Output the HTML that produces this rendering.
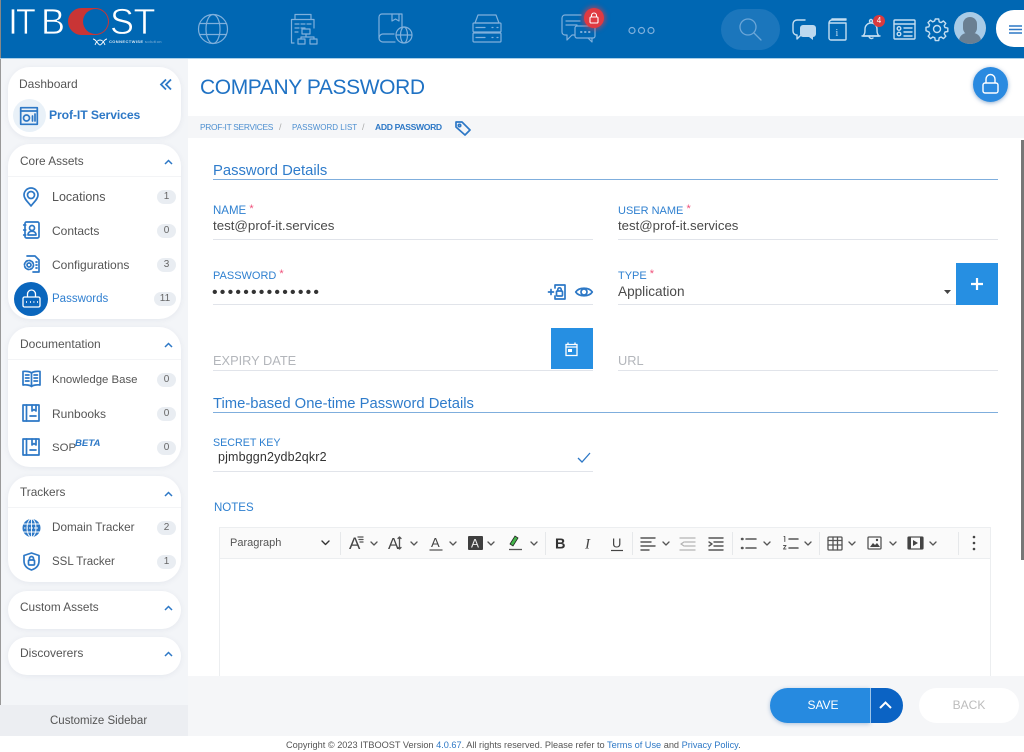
<!DOCTYPE html>
<html><head><meta charset="utf-8"><style>
*{box-sizing:border-box}
html,body{margin:0;padding:0;width:1024px;height:748px;overflow:hidden;background:#fff;font-family:"Liberation Sans",sans-serif;color:#555}
.a{position:absolute;white-space:nowrap}
.card{position:absolute;left:8px;width:173px;background:#fff;border-radius:22px;box-shadow:0 1px 6px rgba(60,80,110,.08)}
.hd{position:absolute;left:20px;font-size:12px;color:#555;line-height:16px;white-space:nowrap}
.it{position:absolute;left:52px;font-size:12px;color:#555;line-height:16px;white-space:nowrap}
.bd{position:absolute;left:157px;width:19px;height:14px;border-radius:7px;background:#e9edf2;color:#666;font-size:10px;line-height:14px;text-align:center}
.lb{position:absolute;font-size:11px;color:#2f80d0;line-height:14px;white-space:nowrap}
.lb i{color:#f0507a;font-style:normal;font-size:11px;position:relative;top:-2px}
.v{position:absolute;font-size:13.3px;color:#4a4a4a;line-height:16px;white-space:nowrap}
.ph{position:absolute;font-size:12.8px;color:#b3b6bb;line-height:16px}
.ln{position:absolute;height:1px;background:#e1e4ea}
.sec{position:absolute;font-size:14.8px;color:#2f7ccb;line-height:18px;white-space:nowrap}
svg{position:absolute;overflow:visible}
.ic{fill:none;stroke:#2d78c6;stroke-width:1.7;stroke-linecap:round;stroke-linejoin:round}
.hi{fill:none;stroke:#7fb0dc;stroke-width:1.2;stroke-linejoin:round;stroke-linecap:round}
.wi{fill:none;stroke:#c4def1;stroke-width:1.4;stroke-linejoin:round;stroke-linecap:round}
.tb{fill:none;stroke:#555;stroke-width:1.3;stroke-linecap:round;stroke-linejoin:round}
.tt{position:absolute;color:#444;white-space:nowrap}
.logo{position:absolute;font-size:36px;line-height:40px;top:2px;color:#fff;-webkit-text-stroke:.7px #0067b3;white-space:nowrap}
</style></head><body>

<!-- main backgrounds -->
<div class="a" style="left:0;top:58px;width:188px;height:690px;background:#f3f5f8"></div>
<div class="a" style="left:188px;top:116px;width:836px;height:22px;background:#f5f6f8"></div>
<div class="a" style="left:0;top:58px;width:1px;height:690px;background:#999"></div>
<div class="a" style="left:1021px;top:140px;width:3px;height:420px;background:#777"></div>

<!-- header -->
<div class="a" style="left:0;top:0;width:1024px;height:58px;background:#0067b3"></div>
<div class="a" style="left:0;top:58px;width:1024px;height:1px;background:#a9cfe8"></div>
<div class="a" style="left:0;top:0;width:1px;height:58px;background:#888"></div>

<!-- logo -->
<div class="a" style="left:68px;top:8px;width:41px;height:27px;border-radius:14px;background:#c93535"></div>
<div class="a" style="left:83px;top:9px;width:25px;height:25px;border-radius:13px;background:#0067b3"></div>
<div class="logo" style="left:8px">I</div>
<div class="logo" style="left:16px;transform:scaleX(.9);transform-origin:0 0">T</div>
<div class="logo" style="left:41px">B</div>
<div class="logo" style="left:110px;letter-spacing:-.5px">ST</div>
<svg style="left:90px;top:37px" width="20" height="10" viewBox="0 0 20 10"><path d="M3 2c3 0 5 6 7 6s4-6 7-6M5 8c1-3 3-5 5-5s4 2 5 5" fill="none" stroke="#fff" stroke-width=".9"/></svg>
<div class="a" style="left:109px;top:39px;font-size:4px;line-height:6px;color:#dce8f3;letter-spacing:.4px;font-weight:bold">CONNECTWISE <span style="font-weight:400;color:#8fb8da">solution</span></div>

<!-- header icons -->
<svg style="left:198px;top:14px" width="30" height="30" viewBox="0 0 30 30"><g class="hi"><circle cx="15" cy="15" r="14.5"/><ellipse cx="15" cy="15" rx="7" ry="14.5"/><path d="M2 9.500h26M2 20.500h26"/></g></svg>
<svg style="left:290px;top:13px" width="29" height="32" viewBox="0 0 29 32"><g class="hi"><path d="M4 30H1.500V6.500H24V15M5 6V1.500h16V6"/><path d="M5 11h4M11 11h4M17 11h4M5 15h4M11 15h4M5 19h3"/><rect x="12" y="16" width="8" height="5"/><rect x="8" y="26" width="7" height="5"/><rect x="20" y="26" width="7" height="5"/><path d="M16 21v3M11 26v-2h13v2"/></g></svg>
<svg style="left:378px;top:13px" width="36" height="31" viewBox="0 0 36 31"><g class="hi"><path d="M17 29H5a4 4 0 0 1-4-4V4a3 3 0 0 1 3-3h20v15"/><path d="M1 25a4 4 0 0 1 4-4h11"/><path d="M14 1v7l3.500-2 3.500 2V1"/><circle cx="26" cy="22" r="8"/><ellipse cx="26" cy="22" rx="3.500" ry="8"/><path d="M18 22h16"/></g></svg>
<svg style="left:472px;top:14px" width="30" height="29" viewBox="0 0 30 29"><g class="hi"><path d="M3 9l3-8h18l3 8z"/><rect x="1" y="9" width="28" height="9" rx="1"/><rect x="1" y="19" width="28" height="9" rx="1"/><path d="M4 13.500h9M4 23.500h9M20 13.500h1M25 13.500h1M20 23.500h1M25 23.500h1"/></g></svg>
<svg style="left:561px;top:14px" width="36" height="29" viewBox="0 0 36 29"><g class="hi"><path d="M20 1H4a3 3 0 0 0-3 3v14a3 3 0 0 0 3 3h2v5l5-5h3"/><path d="M5 7h14M5 11h11"/><rect x="14" y="12" width="20" height="12" rx="2"/><path d="M27 24l4 4v-4"/><path d="M20 18h.5M24 18h.5M28 18h.5" stroke-width="2"/></g></svg>
<div class="a" style="left:584px;top:8px;width:20px;height:20px;border-radius:10px;background:#e03a42;box-shadow:0 0 4px 2px rgba(220,60,70,.55)"></div>
<svg style="left:589px;top:12px" width="10" height="12" viewBox="0 0 10 12"><path d="M2.500 5V3.500a2.500 2.500 0 0 1 5 0V5" fill="none" stroke="#fff" stroke-width="1.100"/><rect x="1" y="5" width="8" height="6" rx="1" fill="none" stroke="#fff" stroke-width="1.100"/></svg>
<svg style="left:628px;top:26px" width="27" height="9" viewBox="0 0 27 9"><g class="hi" stroke-width="1"><circle cx="4" cy="4.500" r="3"/><circle cx="13.500" cy="4.500" r="3"/><circle cx="23" cy="4.500" r="3"/></g></svg>

<div class="a" style="left:721px;top:9px;width:59px;height:41px;border-radius:21px;background:#1b76bc"></div>
<svg style="left:739px;top:18px" width="23" height="23" viewBox="0 0 23 23"><g fill="none" stroke="#6ba6d8" stroke-width="1.300"><circle cx="9" cy="9" r="8"/><path d="M15 15l7 7" stroke-linecap="round"/></g></svg>

<svg style="left:792px;top:18px" width="25" height="23" viewBox="0 0 25 23"><path class="wi" d="M13 2H5a4 4 0 0 0-4 4v7a4 4 0 0 0 4 4v4l4-4"/><path d="M11 7h10a3 3 0 0 1 3 3v6a3 3 0 0 1-3 3v3l-4-3h-6a3 3 0 0 1-3-3v-6a3 3 0 0 1 3-3z" fill="#bcd8ee"/></svg>
<svg style="left:828px;top:18px" width="19" height="23" viewBox="0 0 19 23"><g class="wi"><path d="M1 5v15a2 2 0 0 0 2 2h14a1 1 0 0 0 1-1V5z"/><path d="M1 5a3 3 0 0 1 3-3h14M4 2V1h14"/></g><text x="7.500" y="18" font-size="10" fill="#c4def1" font-family="Liberation Serif">i</text></svg>
<svg style="left:861px;top:18px" width="20" height="23" viewBox="0 0 20 23"><g class="wi"><path d="M2 18c2-2 2-4 2-7a6 6 0 0 1 12 0c0 3 0 5 2 7z"/><path d="M1 18h18M8 18a2.500 2.500 0 0 0 4 2"/><circle cx="10" cy="3" r="1.500"/></g></svg>
<div class="a" style="left:873px;top:15px;width:12px;height:12px;border-radius:6px;background:#d93a3f;color:#fff;font-size:8px;line-height:12px;text-align:center">4</div>
<svg style="left:893px;top:19px" width="23" height="21" viewBox="0 0 23 21"><g class="wi"><rect x="1" y="1" width="21" height="19" rx="1"/><path d="M1 5h21M11 9h8M11 13h8M11 17h8"/><circle cx="6" cy="9.500" r="1.800"/><circle cx="6" cy="15" r="1.800"/></g></svg>
<svg style="left:926px;top:18px" width="22" height="22" viewBox="0 0 22 22"><g class="wi"><circle cx="11" cy="11" r="3.500"/><path d="M9.300 1h3.400l.5 2.800 1.900.8 2.300-1.600 2.400 2.400-1.600 2.300.8 1.900 2.800.5v3.400l-2.800.5-.8 1.900 1.600 2.300-2.400 2.400-2.300-1.600-1.900.8-.5 2.800H9.300l-.5-2.800-1.900-.8-2.300 1.600-2.400-2.400 1.600-2.300-.8-1.900L0 12.700V9.300l2.800-.5.8-1.900L2 4.600 4.400 2.200l2.300 1.600 1.900-.8z"/></g></svg>
<div class="a" style="left:954px;top:12px;width:32px;height:32px;border-radius:16px;background:#a9cbe6;overflow:hidden">
<div class="a" style="left:9px;top:5px;width:14px;height:18px;border-radius:7px;background:#6a7f92"></div>
<div class="a" style="left:5px;top:21px;width:22px;height:14px;border-radius:8px 8px 0 0;background:#6a7f92"></div></div>
<div class="a" style="left:996px;top:10px;width:60px;height:37px;border-radius:18px;background:#fff"></div>
<svg style="left:1009px;top:25px" width="13" height="9" viewBox="0 0 13 9"><path d="M0 1h13M0 4.500h13M0 8h13" stroke="#2d78c6" stroke-width="1.500"/></svg>

<!-- sidebar -->
<div class="card" style="top:67px;height:70px"></div>
<div class="hd" style="left:19px;top:76px;font-size:12px">Dashboard</div>
<svg style="left:160px;top:79px" width="12" height="11" viewBox="0 0 12 11"><path d="M6 .5L1 5.500l5 5M11 .5L6 5.500l5 5" fill="none" stroke="#2d78c6" stroke-width="1.800"/></svg>
<div class="a" style="left:13px;top:99px;width:33px;height:33px;border-radius:17px;background:#e9f1f8"></div>
<svg style="left:20px;top:107px" width="18" height="18" viewBox="0 0 18 18"><g class="ic"><rect x=".7" y=".7" width="16.600" height="16.600"/><path d="M.7 4h16.600"/><circle cx="6.500" cy="11" r="3"/><path d="M12.500 14V9M15 14V7"/></g></svg>
<div class="a" style="left:49px;top:107px;font-size:12.200px;line-height:16px;font-weight:bold;color:#2d78c6;letter-spacing:-.1px">Prof-IT Services</div>

<div class="card" style="top:144px;height:175px"></div>
<div class="a" style="left:8px;top:176px;width:173px;height:1px;background:#f3f4f6"></div>
<div class="hd" style="top:153px;font-size:11.8px">Core Assets</div>
<svg style="left:164px;top:159px" width="9" height="6" viewBox="0 0 9 6"><path d="M1 5l3.500-3.500L8 5" fill="none" stroke="#2d78c6" stroke-width="1.500"/></svg>
<svg style="left:23px;top:187px" width="16" height="20" viewBox="0 0 16 20"><g class="ic"><path d="M8 19C5 15 1 12 1 8a7 7 0 0 1 14 0c0 4-4 7-7 11z"/><circle cx="8" cy="8" r="3.500"/></g></svg>
<div class="it" style="top:189px;font-size:12.500px">Locations</div><div class="bd" style="top:190px">1</div>
<svg style="left:23px;top:221px" width="17" height="18" viewBox="0 0 17 18"><g class="ic"><rect x="2" y="1" width="14" height="16" rx="1.500"/><circle cx="9" cy="7" r="2.500"/><path d="M5 14c0-5 8-5 8 0zM.7 4h2M.7 9h2M.7 14h2"/></g></svg>
<div class="it" style="top:223px">Contacts</div><div class="bd" style="top:224px">0</div>
<svg style="left:23px;top:255px" width="17" height="18" viewBox="0 0 17 18"><g class="ic"><path d="M4 1h8l4 4v12H10M13 7h1M13 10h1M13 13h1"/><circle cx="6" cy="10" r="2"/><circle cx="6" cy="10" r="4.500" stroke-dasharray="2 1.500" stroke-width="1.800"/></g></svg>
<div class="it" style="top:257px">Configurations</div><div class="bd" style="top:258px">3</div>
<div class="a" style="left:14px;top:282px;width:34px;height:34px;border-radius:17px;background:#0a66bd"></div>
<svg style="left:22px;top:289px" width="19" height="19" viewBox="0 0 19 19"><g fill="none" stroke="#fff" stroke-width="1.300"><path d="M5.500 8V5a4 4 0 0 1 8 0v3"/><rect x="1" y="8" width="17" height="10" rx="1.500"/><path d="M4 13h.8M8 13h.8M11.500 13h.8M15 13h.8" stroke-width="2"/></g></svg>
<div class="it" style="top:291px;color:#2f7fd0;font-size:11.500px">Passwords</div><div class="bd" style="top:292px;left:154px;width:22px">11</div>

<div class="card" style="top:327px;height:140px"></div>
<div class="a" style="left:8px;top:359px;width:173px;height:1px;background:#f3f4f6"></div>
<div class="hd" style="top:336px">Documentation</div>
<svg style="left:164px;top:342px" width="9" height="6" viewBox="0 0 9 6"><path d="M1 5l3.500-3.500L8 5" fill="none" stroke="#2d78c6" stroke-width="1.500"/></svg>
<svg style="left:22px;top:370px" width="19" height="18" viewBox="0 0 19 18"><g class="ic" stroke-width="1.400"><path d="M9.500 3C8 1.500 3 1 1 1.500V15c2-.5 7 0 8.500 1.500C11 15 16 14.500 18 15V1.500C16 1 11 1.500 9.500 3zM9.500 3v13.500M3.500 5h3.500M3.500 8h3.500M3.500 11h3.500M12 5h3.500M12 8h3.500M12 11h3.500"/></g></svg>
<div class="it" style="top:372px;font-size:11.400px">Knowledge Base</div><div class="bd" style="top:373px">0</div>
<svg style="left:22px;top:404px" width="18" height="18" viewBox="0 0 18 18"><g class="ic"><rect x="1" y="1" width="16" height="16"/><path d="M4.500 1v16M10 1v6l2-1.500L14 7V1M8 12h6"/></g></svg>
<div class="it" style="top:406px;font-size:12px">Runbooks</div><div class="bd" style="top:407px">0</div>
<svg style="left:22px;top:438px" width="18" height="18" viewBox="0 0 18 18"><g class="ic"><rect x="1" y="1" width="16" height="16"/><path d="M4.500 1v16M10 1v6l2-1.500L14 7V1M8 12h6"/></g></svg>
<div class="it" style="top:440px;font-size:11.400px">SOP</div>
<div class="a" style="left:75px;top:437px;font-size:9.600px;line-height:13px;font-weight:bold;font-style:italic;color:#2d78c6">BETA</div>
<div class="bd" style="top:441px">0</div>

<div class="card" style="top:476px;height:106px"></div>
<div class="a" style="left:8px;top:507px;width:173px;height:1px;background:#f3f4f6"></div>
<div class="hd" style="top:484px;font-size:11.800px">Trackers</div>
<svg style="left:164px;top:491px" width="9" height="6" viewBox="0 0 9 6"><path d="M1 5l3.500-3.500L8 5" fill="none" stroke="#2d78c6" stroke-width="1.500"/></svg>
<svg style="left:22px;top:519px" width="19" height="18" viewBox="0 0 19 18"><circle cx="9.500" cy="9" r="9" fill="#2d78c6"/><g fill="none" stroke="#fff" stroke-width=".9"><ellipse cx="9.500" cy="9" rx="4.500" ry="9"/><path d="M1 5h17M1 13h17M9.500 0v18"/><path d="M2 9h15" stroke-dasharray="1.500 1"/></g></svg>
<div class="it" style="top:520px;font-size:11.700px">Domain Tracker</div><div class="bd" style="top:521px">2</div>
<svg style="left:23px;top:552px" width="17" height="19" viewBox="0 0 17 19"><g class="ic" stroke-width="1.500"><path d="M8.500 1l7.500 2.500V9c0 4.500-3 7.500-7.500 9C4 16.500 1 13.500 1 9V3.500z"/><rect x="5.500" y="8" width="6" height="5" rx="1"/><path d="M6.500 8V6.500a2 2 0 0 1 4 0V8"/></g></svg>
<div class="it" style="top:554px;font-size:11.500px">SSL Tracker</div><div class="bd" style="top:555px">1</div>

<div class="card" style="top:591px;height:38px"></div>
<div class="hd" style="top:599px;font-size:11.800px">Custom Assets</div>
<svg style="left:164px;top:605px" width="9" height="6" viewBox="0 0 9 6"><path d="M1 5l3.500-3.500L8 5" fill="none" stroke="#2d78c6" stroke-width="1.500"/></svg>
<div class="card" style="top:637px;height:38px"></div>
<div class="hd" style="top:645px">Discoverers</div>
<svg style="left:164px;top:651px" width="9" height="6" viewBox="0 0 9 6"><path d="M1 5l3.500-3.500L8 5" fill="none" stroke="#2d78c6" stroke-width="1.500"/></svg>

<div class="a" style="left:0;top:705px;width:188px;height:31px;background:#eceef2"></div>
<div class="a" style="left:50px;top:713px;font-size:11.500px;line-height:16px;color:#555">Customize Sidebar</div>

<!-- title -->
<div class="a" style="left:200px;top:74px;font-size:21px;line-height:28px;letter-spacing:-.4px;color:#1f72c4">COMPANY PASSWORD</div>
<div class="a" style="left:973px;top:67px;width:35px;height:35px;border-radius:18px;background:#2a8ae0;box-shadow:0 1px 4px rgba(30,90,160,.5)"></div>
<svg style="left:982px;top:73px" width="17" height="22" viewBox="0 0 17 22"><g fill="none" stroke="#fff" stroke-width="1.400"><path d="M4 10V6a4.500 4.500 0 0 1 9 0v4"/><rect x="1" y="10" width="15" height="10" rx="2"/></g></svg>

<!-- breadcrumb -->
<div class="a" style="left:200px;top:121px;font-size:8.400px;line-height:13px;letter-spacing:-.3px;color:#4d8fd0">PROF-IT SERVICES</div>
<div class="a" style="left:279px;top:121px;font-size:9px;line-height:13px;color:#aaa">/</div>
<div class="a" style="left:292px;top:121px;font-size:8px;line-height:13px;color:#4d8fd0">PASSWORD LIST</div>
<div class="a" style="left:362px;top:121px;font-size:9px;line-height:13px;color:#aaa">/</div>
<div class="a" style="left:375px;top:121px;font-size:8.600px;line-height:13px;color:#2d78c6;font-weight:bold;letter-spacing:-.35px">ADD PASSWORD</div>
<svg style="left:455px;top:121px" width="16" height="15" viewBox="0 0 16 15"><g class="ic" stroke-width="1"><path d="M1 1h6l8 8-5 5-9-8z"/><circle cx="4.500" cy="4.500" r="1.200"/></g></svg>

<!-- form -->
<div class="sec" style="left:213px;top:162px">Password Details</div>
<div class="a" style="left:213px;top:179px;width:785px;height:1px;background:#7faedd"></div>

<div class="lb" style="left:213px;top:204px;font-size:11.500px">NAME <i>*</i></div>
<div class="v" style="left:213px;top:218px">test@prof-it.services</div>
<div class="ln" style="left:213px;top:239px;width:380px"></div>
<div class="lb" style="left:618px;top:204px">USER NAME <i>*</i></div>
<div class="v" style="left:618px;top:218px;font-size:13.200px">test@prof-it.services</div>
<div class="ln" style="left:618px;top:239px;width:380px"></div>

<div class="lb" style="left:213px;top:269px">PASSWORD <i>*</i></div>
<div class="v" style="left:212px;top:285px;letter-spacing:2.200px;font-size:16px;color:#333">••••••••••••••</div>
<div class="ln" style="left:213px;top:304px;width:380px"></div>
<svg style="left:548px;top:284px" width="18" height="16" viewBox="0 0 18 16"><g class="ic" stroke-width="1.100"><path d="M7 4V1h10v14H7v-3"/><rect x="8.500" y="7" width="6" height="5" rx="1"/><path d="M9.800 7V5.500a1.700 1.700 0 0 1 3.400 0V7M.5 8h5M3 5.500v5"/></g></svg>
<svg style="left:575px;top:285px" width="18" height="14" viewBox="0 0 18 14"><g class="ic" stroke-width="1.200"><path d="M.7 7C4 2 14 2 17.300 7 14 12 4 12 .7 7z"/><circle cx="9" cy="7" r="3"/></g></svg>
<div class="lb" style="left:618px;top:269px">TYPE <i>*</i></div>
<div class="v" style="left:618px;top:284px;font-size:13.600px">Application</div>
<svg style="left:944px;top:290px" width="7" height="4" viewBox="0 0 7 4"><path d="M0 0h7L3.500 4z" fill="#444"/></svg>
<div class="ln" style="left:618px;top:304px;width:338px"></div>
<div class="a" style="left:956px;top:263px;width:42px;height:42px;background:#268fe2"></div>
<svg style="left:971px;top:278px" width="12" height="12" viewBox="0 0 12 12"><path d="M6 0v12M0 6h12" stroke="#fff" stroke-width="2.200"/></svg>

<div class="ph" style="left:213px;top:353px">EXPIRY DATE</div>
<div class="ln" style="left:213px;top:370px;width:380px"></div>
<div class="a" style="left:551px;top:328px;width:42px;height:41px;background:#268fe2"></div>
<svg style="left:565px;top:342px" width="13" height="14" viewBox="0 0 13 14"><path d="M1 2.500h11v11H1zM3 .5v2M10 .5v2M1 5h11" fill="none" stroke="#fff" stroke-width="1.300"/><rect x="3" y="7" width="4" height="3" fill="#fff"/></svg>
<div class="ph" style="left:618px;top:353px">URL</div>
<div class="ln" style="left:618px;top:370px;width:380px"></div>

<div class="sec" style="left:213px;top:395px">Time-based One-time Password Details</div>
<div class="a" style="left:213px;top:412px;width:785px;height:1px;background:#7faedd"></div>

<div class="lb" style="left:213px;top:436px;font-size:10.700px">SECRET KEY</div>
<div class="v" style="left:218px;top:449px;font-size:12.500px;color:#333;letter-spacing:.15px">pjmbggn2ydb2qkr2</div>
<div class="ln" style="left:213px;top:471px;width:380px"></div>
<svg style="left:577px;top:452px" width="14" height="11" viewBox="0 0 14 11"><path d="M1 6l4 4 8-9" fill="none" stroke="#2d78c6" stroke-width="1.300"/></svg>

<div class="lb" style="left:214px;top:501px;font-size:11.500px">NOTES</div>

<!-- editor -->
<div class="a" style="left:219px;top:527px;width:772px;height:160px;border:1px solid #eceef0;background:#fff"></div>
<div class="a" style="left:220px;top:528px;width:770px;height:31px;background:#fafafa;border-bottom:1px solid #eceef0"></div>
<div class="tt" style="left:230px;top:536px;font-size:11px;line-height:14px;color:#555">Paragraph</div>
<svg style="left:0;top:528px" width="1024" height="31" viewBox="0 0 1024 31">
<path d="M340.500 4v23M545.500 4v23M632.500 4v23M732.500 4v23M819.500 4v23M958.500 4v23" stroke="#e6e8ea" fill="none"/>
<g class="tb" stroke-width="1.200">
<path d="M322 13l3.500 3.500 3.500-3.500" stroke="#333" stroke-width="1.400"/>
<path d="M371 14l3 3 3-3M411 14l3 3 3-3M450 14l3 3 3-3M488 14l3 3 3-3M531 14l3 3 3-3M663 14l3 3 3-3M764 14l3 3 3-3M805 14l3 3 3-3M849 14l3 3 3-3M890 14l3 3 3-3M930 14l3 3 3-3"/>
<path d="M358 9h5M359 11.500h4M360 14h3"/>
<path d="M399.500 9v12M398 10.500l1.500-1.500 1.500 1.500M398 19.500l1.500 1.500 1.500-1.500"/>
<path d="M430 22h12" />
<path d="M641 10h14M641 14h10M641 18h14M641 22h8" stroke-width="1.400"/>
<path d="M680 10h15M685 14h10M685 18h10M680 22h15M684 14l-3 2 3 2" stroke="#b4b4b4"/>
<path d="M709 10h14M714 14h9M714 18h9M709 22h14M709 14l3 2-3 2" stroke-width="1.400"/>
<path d="M742 11h.5M742 20h.5" stroke-width="2.500"/><path d="M746 11h10M746 20h10" stroke-width="1.500"/>
<path d="M784 8.500h.8v5M783.500 17.500h2.500l-2.500 3.500h2.500" stroke-width="1"/><path d="M789 11h9M789 20h9" stroke-width="1.500"/>
<rect x="828" y="9" width="14" height="13" rx="1"/><path d="M828 12.500h14M828 17h14M833 9v13M837.500 9v13"/>
<rect x="868" y="9" width="13" height="12" rx="1"/>
<rect x="908" y="9" width="15" height="12" rx="1"/>
</g>
<text x="349" y="21" font-size="17" fill="#444" font-family="Liberation Sans">A</text>
<text x="388" y="21" font-size="16" fill="#444" font-family="Liberation Sans">A</text>
<text x="431" y="19" font-size="13" fill="#444" font-family="Liberation Sans">A</text>
<rect x="468" y="8" width="15" height="14" rx="1" fill="#3f3f3f"/>
<text x="471" y="19.500" font-size="12" fill="#eee" font-family="Liberation Sans">A</text>
<path d="M510 16l5-8 3 2-5 8z" fill="#44b54a" stroke="#222" stroke-width=".8"/><path d="M509 21.500h13" stroke="#555" stroke-width="1.300"/>
<text x="555" y="20.500" font-size="14.500" font-weight="bold" fill="#333" font-family="Liberation Sans">B</text>
<text x="585" y="20.500" font-size="15" font-style="italic" fill="#444" font-family="Liberation Serif">I</text>
<text x="612" y="19.500" font-size="13" fill="#444" font-family="Liberation Sans">U</text>
<path d="M611 22.500h12" stroke="#444" stroke-width="1.200"/>
<path d="M870 19l3-4 2 2 2-2 3 4z" fill="#444"/><circle cx="877" cy="12" r="1.200" fill="#444"/>
<path d="M913 12l5 3-5 3z" fill="#444"/>
<path d="M908 9h3v12h-3zM920 9h3v12h-3z" fill="#444"/>
<circle cx="974" cy="9" r="1.300" fill="#444"/><circle cx="974" cy="15" r="1.300" fill="#444"/><circle cx="974" cy="21" r="1.300" fill="#444"/>
</svg>

<!-- footer bar -->
<div class="a" style="left:188px;top:676px;width:836px;height:60px;background:#f5f6f8"></div>
<div class="a" style="left:770px;top:688px;width:100px;height:35px;border-radius:18px 0 0 18px;background:#268ae0;color:#fff;font-size:12px;line-height:35px;text-align:center;padding-left:6px;box-shadow:0 1px 4px rgba(30,90,160,.35)">SAVE</div>
<div class="a" style="left:870px;top:688px;width:33px;height:35px;border-radius:0 18px 18px 0;background:#0b63c4;border-left:1px solid #9cc4ea"></div>
<svg style="left:879px;top:701px" width="13" height="8" viewBox="0 0 13 8"><path d="M1 7l5.500-5.500L12 7" fill="none" stroke="#fff" stroke-width="2"/></svg>
<div class="a" style="left:919px;top:688px;width:100px;height:35px;border-radius:18px;background:#fff;color:#bcbcbc;font-size:12px;line-height:35px;text-align:center">BACK</div>

<div class="a" style="left:0;top:736px;width:1024px;height:12px;background:#fff"></div>
<div class="a" style="left:286px;top:738px;font-size:9.200px;line-height:14px;color:#555">Copyright © 2023 ITBOOST Version <span style="color:#2d78c6">4.0.67</span>. All rights reserved. Please refer to <span style="color:#2d78c6">Terms of Use</span> and <span style="color:#2d78c6">Privacy Policy</span>.</div>
</body></html>
